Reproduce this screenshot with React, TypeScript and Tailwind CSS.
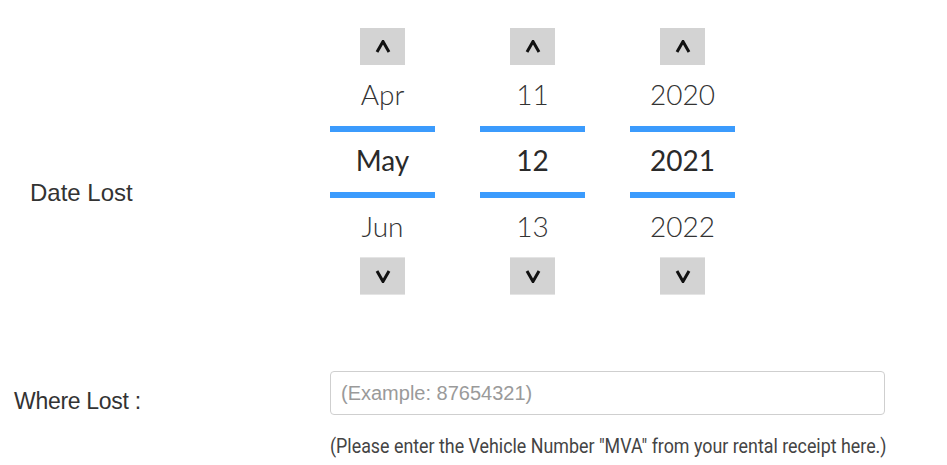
import React, { useState } from "react";

const months = ["Jan", "Feb", "Mar", "Apr", "May", "Jun", "Jul", "Aug", "Sep", "Oct", "Nov", "Dec"];

const Caret = ({ up }: { up?: boolean }) => (
  <svg width="16" height="13" viewBox="0 0 16 13" fill="none">
    <polyline
      points={up ? "2,12 8,1.5 14,12" : "2,1 8,11.5 14,1"}
      stroke="#111"
      strokeWidth="3"
      strokeLinejoin="miter"
    />
  </svg>
);

const Wheel = ({
  prev,
  value,
  next,
  onUp,
  onDown,
}: {
  prev: string;
  value: string;
  next: string;
  onUp: () => void;
  onDown: () => void;
}) => (
  <div className="flex w-[105px] flex-col items-center text-[#333] font-['Lato','Noto_Sans',sans-serif] text-[28px]">
    <button
      type="button"
      onClick={onUp}
      className="flex h-[37px] w-[45px] items-center justify-center bg-[#d3d3d3]"
    >
      <Caret up />
    </button>
    <div className="flex h-[61px] items-center pb-[4px] font-light">{prev}</div>
    <div className="h-[6px] w-full bg-[#3b9bfd]" />
    <div className="flex h-[60px] items-center pb-[4px] font-normal text-[#2a2a2a]">{value}</div>
    <div className="h-[6px] w-full bg-[#3b9bfd]" />
    <div className="flex h-[59px] items-center pb-[4px] font-light">{next}</div>
    <button
      type="button"
      onClick={onDown}
      className="flex h-[38px] w-[45px] items-center justify-center border-y border-[#e4e4e4] bg-[#d3d3d3]"
    >
      <Caret />
    </button>
  </div>
);

export default function App() {
  const [month, setMonth] = useState(4);
  const [day, setDay] = useState(12);
  const [year, setYear] = useState(2021);
  const [mva, setMva] = useState("");

  const m = (i: number) => months[(i + 12) % 12];
  const d = (n: number) => String(((n - 1 + 31) % 31) + 1);

  return (
    <div className="h-[465px] w-[947px] overflow-hidden bg-white">
      <div className="flex pt-[28px]">
        <div className="w-[330px] pl-[30px] pt-[151px] font-['Liberation_Sans',Arial,sans-serif] text-[24px] leading-[28px] text-[#333]">
          Date Lost
        </div>
        <div className="flex gap-[45px]">
          <Wheel
            prev={m(month - 1)}
            value={m(month)}
            next={m(month + 1)}
            onUp={() => setMonth((v) => (v + 11) % 12)}
            onDown={() => setMonth((v) => (v + 1) % 12)}
          />
          <Wheel
            prev={d(day - 1)}
            value={d(day)}
            next={d(day + 1)}
            onUp={() => setDay((v) => ((v - 2 + 31) % 31) + 1)}
            onDown={() => setDay((v) => (v % 31) + 1)}
          />
          <Wheel
            prev={String(year - 1)}
            value={String(year)}
            next={String(year + 1)}
            onUp={() => setYear((v) => v - 1)}
            onDown={() => setYear((v) => v + 1)}
          />
        </div>
      </div>

      <div className="mt-[76px] flex">
        <div className="w-[330px] pl-[14px] pt-[16px] font-['Liberation_Sans',Arial,sans-serif] text-[23px] leading-[28px] tracking-[-0.3px] text-[#333]">
          Where Lost :
        </div>
        <div className="w-[555px]">
          <input
            value={mva}
            onChange={(e) => setMva(e.target.value)}
            placeholder="(Example: 87654321)"
            className="h-[44px] w-full rounded-[4px] border border-[#cfcfcf] px-[10px] font-['Liberation_Sans',Arial,sans-serif] text-[20px] text-[#333] placeholder-[#9a9a9a] focus:outline-none"
          />
          <p className="mt-[19px] origin-left scale-x-[0.892] whitespace-nowrap font-['Roboto',sans-serif] text-[20px] leading-[24px] text-[#444]">
            (Please enter the Vehicle Number "MVA" from your rental receipt here.)
          </p>
        </div>
      </div>
    </div>
  );
}
